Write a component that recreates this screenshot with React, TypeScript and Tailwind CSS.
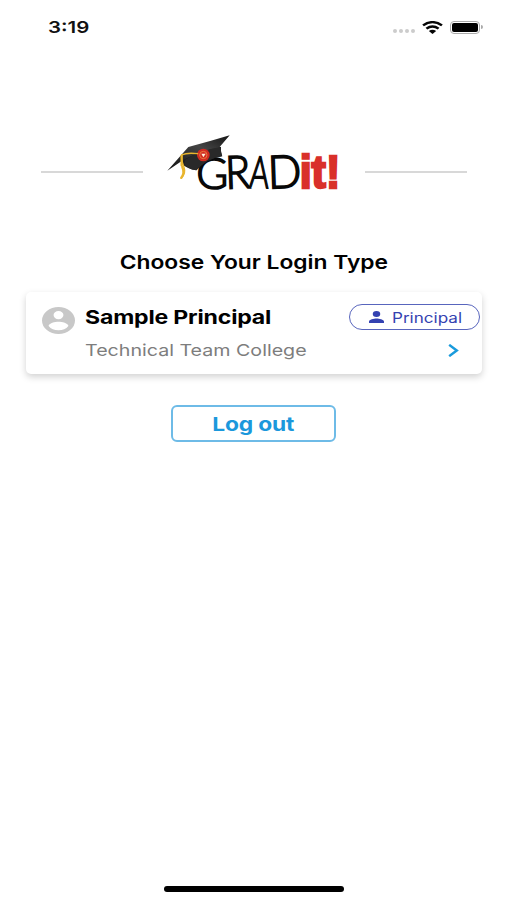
function Logo() {
  return (
    <svg viewBox="0 0 570 225" className="h-[75px] w-[190px] shrink-0" role="img" aria-label="GRADit!">
      <defs>
        <linearGradient id="board" x1="0" y1="1" x2="1" y2="0">
          <stop offset="0" stopColor="#111" />
          <stop offset="0.6" stopColor="#444" />
          <stop offset="1" stopColor="#161616" />
        </linearGradient>
      </defs>
      <g fill="#080808" stroke="#080808" strokeWidth="5" fontFamily="Lato, 'Liberation Sans', sans-serif" fontWeight="300">
        <text x="112" y="191" fontSize="132" textLength="96" lengthAdjust="spacingAndGlyphs">G</text>
        <text x="200" y="191" fontSize="137" textLength="75" lengthAdjust="spacingAndGlyphs" transform="rotate(-2 210 190)">R</text>
        <text x="270" y="188" fontSize="132" textLength="58" lengthAdjust="spacingAndGlyphs" transform="rotate(3 300 190)">A</text>
        <text x="328" y="190" fontSize="137" textLength="101" lengthAdjust="spacingAndGlyphs" transform="rotate(-2 340 190)">D</text>
      </g>
      <text x="422" y="188" fontSize="136" fontWeight="700" fill="#d9302a" stroke="#d9302a" strokeWidth="7" fontFamily="'Liberation Sans', Arial, sans-serif" textLength="122" lengthAdjust="spacingAndGlyphs">it!</text>
      <path d="M70 96 L172 64 L186 66 Q184 80 190 94 Q145 100 112 136 Q84 132 70 118Z" fill="#202020" />
      <path d="M25 137 L88 66 Q150 50 212 31 L180 68 Q125 76 76 103Z" fill="url(#board)" />
      <path d="M80 103 Q132 73 184 67 L189 93 Q145 99 112 136 Q86 132 76 117Z" fill="#292929" />
      <circle cx="133" cy="90" r="19" fill="#d12a20" />
      <circle cx="133" cy="90" r="11" fill="none" stroke="#e9763d" strokeWidth="3" />
      <path d="M127 86 h13 l-7 11Z" fill="#fff0db" />
      <path d="M116 86 Q84 82 68 90 Q66 105 75 126 Q82 146 66 160" fill="none" stroke="#e9b52d" strokeWidth="4" strokeLinecap="round" />
      <path d="M68 92 V121 M70 126 Q78 144 67 158" fill="none" stroke="#e9b52d" strokeWidth="7" strokeLinecap="round" />
    </svg>
  );
}

function StatusBar() {
  return (
    <header className="flex h-[54px] shrink-0 items-center pl-12 pr-6">
      <span className="block origin-left scale-x-[1.24] text-[16.5px] font-semibold leading-none text-[#111]">3:19</span>
      <div className="ml-auto flex items-center">
        <div className="mr-[7px] mt-2 flex gap-[2px]">
          <i className="size-1 rounded-full bg-[#ccc]" />
          <i className="size-1 rounded-full bg-[#ccc]" />
          <i className="size-1 rounded-full bg-[#ccc]" />
          <i className="size-1 rounded-full bg-[#ccc]" />
        </div>
        <svg viewBox="0 0 20 14" preserveAspectRatio="none" className="mr-[7px] h-[13px] w-[21px]" fill="none" stroke="#050505" strokeWidth="2.5">
          <path d="M1 4.8 Q10 -2.4 19 4.8 M4.2 8.3 Q10 3.6 15.8 8.3" />
          <path d="M6.5 10.8 Q10 8 13.5 10.8 L10 14Z" fill="#050505" stroke="none" />
        </svg>
        <div className="h-[13px] w-[30px] rounded-[4px] border border-[#aaa] p-[1px]">
          <div className="h-full rounded-[2px] bg-black" />
        </div>
        <i className="ml-px h-1 w-[2px] rounded-r-full bg-[#aaa]" />
      </div>
    </header>
  );
}

export default function App() {
  return (
    <main className="flex h-[900px] w-[507px] flex-col overflow-hidden bg-white font-['Inter','Liberation_Sans',sans-serif] text-black">
      <StatusBar />
      <div className="mt-[71px] flex h-[75px] shrink-0 items-center justify-center">
        <div className="mt-[18px] h-[2px] w-[102px] bg-[#d8d8d8]" />
        <div className="mx-4"><Logo /></div>
        <div className="mt-[18px] h-[2px] w-[102px] bg-[#d8d8d8]" />
      </div>
      <h1 className="mt-[49px] flex h-7 shrink-0 items-center justify-center whitespace-nowrap text-[19px] font-semibold">
        <span className="block scale-x-[1.2]">Choose Your Login Type</span>
      </h1>
      <section className="ml-[26px] mt-[15px] flex h-[82px] w-[456px] shrink-0 rounded-[5px] bg-white pl-4 shadow-[0_3px_7px_rgba(0,0,0,0.18)]">
        <svg viewBox="2 2 20 20" preserveAspectRatio="none" className="mt-[15px] h-[27px] w-[33px] shrink-0" fill="#c8c8c8">
          <path d="M12 2a10 10 0 1 0 0 20 10 10 0 0 0 0-20Zm0 3a3 3 0 1 1 0 6 3 3 0 0 1 0-6Zm0 14.2A7.2 7.2 0 0 1 6 16c0-2 4-3.1 6-3.1S18 14 18 16a7.2 7.2 0 0 1-6 3.2Z" />
        </svg>
        <div className="ml-[10px] flex flex-col whitespace-nowrap">
          <h2 className="mt-[14px] block w-fit origin-left scale-x-[1.215] text-[19px] font-bold leading-6 tracking-[-0.15px]">Sample Principal</h2>
          <p className="mt-[8px] block w-fit origin-left scale-x-[1.19] text-[16.5px] leading-6 text-[#7d7d7d]">Technical Team College</p>
        </div>
        <div className="ml-auto mr-[2px] flex flex-col">
          <div className="mt-[12px] flex h-[26px] w-[131px] items-center rounded-full border-[1.5px] border-[#5865bd] pl-[19px] text-[#3442b1]">
            <svg viewBox="4 4 16 16" preserveAspectRatio="none" className="h-[12px] w-[15px]" fill="currentColor">
              <path d="M12 12a4 4 0 1 0 0-8 4 4 0 0 0 0 8Zm0 2c-2.7 0-8 1.3-8 4v2h16v-2c0-2.700-5.300-4-8-4Z" />
            </svg>
            <span className="ml-2 mt-[2px] block origin-left scale-x-[1.22] text-[14px] leading-none">Principal</span>
          </div>
          <svg viewBox="0 0 10 12" className="ml-[99px] mt-[14px] h-[13px] w-[11px]" fill="none" stroke="#1a9bdc" strokeWidth="2.3">
            <path d="M1 .8 8 6 1 11.200" />
          </svg>
        </div>
      </section>
      <button className="ml-[171px] mt-[31px] flex h-[37px] w-[165px] shrink-0 items-center justify-center rounded-[6px] border-2 border-[#6ebbe7] pt-[3px] text-[19px] font-bold tracking-[-0.15px] text-[#1b98dc]">
        <span className="block scale-x-[1.2] whitespace-nowrap">Log out</span>
      </button>
      <div className="mb-[8px] ml-[164px] mt-auto h-[6px] w-[180px] shrink-0 rounded-full bg-black" />
    </main>
  );
}
